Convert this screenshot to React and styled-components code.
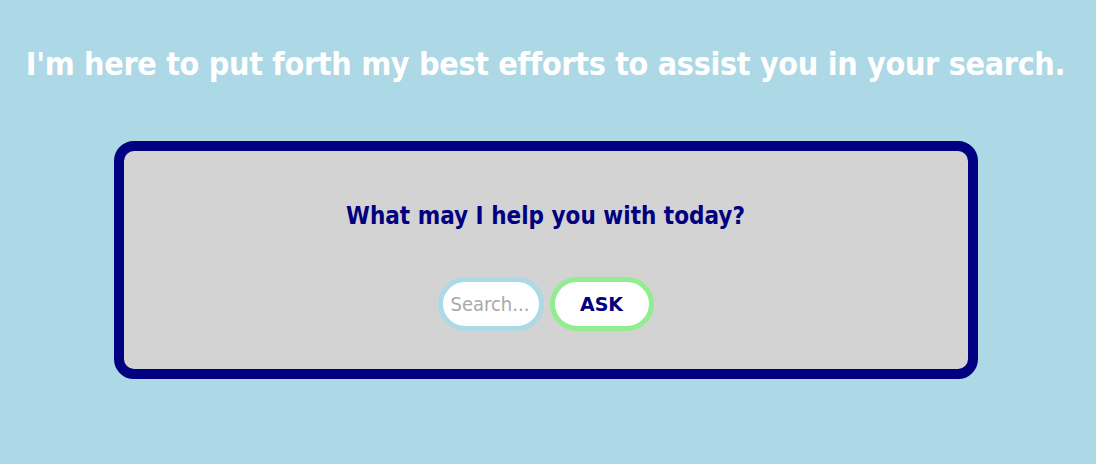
import styled, { createGlobalStyle } from "styled-components";

const GlobalStyle = createGlobalStyle`
  html, body {
    margin: 0;
    padding: 0;
    background: #add8e6;
  }
  body {
    font-family: "DejaVu Sans Condensed", "DejaVu Sans", sans-serif;
  }
`;

const Page = styled.div`
  min-height: 464px;
  display: flex;
  flex-direction: column;
  align-items: center;
  padding: 44px 5px 0 0;
  box-sizing: border-box;
`;

const Title = styled.h1`
  margin: 0;
  color: #ffffff;
  font-size: 32px;
  line-height: 40px;
  font-weight: bold;
  letter-spacing: -0.33px;
  text-align: center;
  white-space: nowrap;
`;

const Card = styled.div`
  box-sizing: border-box;
  width: 864px;
  margin-top: 57px;
  padding: 50px 20px 38px;
  background: #d3d3d3;
  border: 10px solid #000080;
  border-radius: 20px;
  display: flex;
  flex-direction: column;
  align-items: center;
`;

const Question = styled.h2`
  margin: 0;
  color: #000080;
  font-size: 24px;
  line-height: 30px;
  font-weight: bold;
`;

const Form = styled.form`
  margin-top: 46px;
  display: flex;
  gap: 6px;
`;

const SearchInput = styled.input`
  box-sizing: border-box;
  width: 106px;
  height: 54px;
  padding: 0 8px;
  border: 5px solid #add8e6;
  border-radius: 27px;
  background: #ffffff;
  font-family: "DejaVu Sans Condensed", "DejaVu Sans", sans-serif;
  font-size: 20px;
  color: #333;
  outline: none;

  &::placeholder {
    color: #a9a9a9;
  }
`;

const AskButton = styled.button`
  box-sizing: border-box;
  width: 104px;
  height: 54px;
  padding: 0;
  border: 5px solid #90ee90;
  border-radius: 27px;
  background: #ffffff;
  color: #000080;
  font-family: "DejaVu Sans", sans-serif;
  font-size: 19px;
  font-weight: bold;
  cursor: pointer;
`;

export default function App() {
  return (
    <>
      <GlobalStyle />
      <Page>
        <Title>I'm here to put forth my best efforts to assist you in your search.</Title>
        <Card>
          <Question>What may I help you with today?</Question>
          <Form onSubmit={(e) => e.preventDefault()}>
            <SearchInput type="text" placeholder="Search..." />
            <AskButton type="submit">ASK</AskButton>
          </Form>
        </Card>
      </Page>
    </>
  );
}
